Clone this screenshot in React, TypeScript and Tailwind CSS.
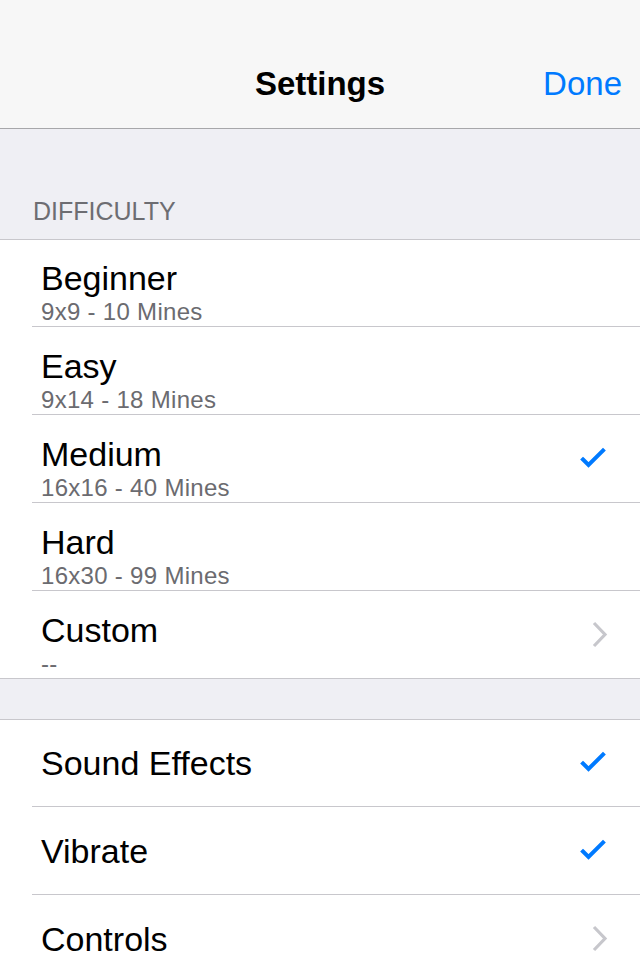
import React from "react";

const font = { fontFamily: '"Liberation Sans", Arial, sans-serif' };

function Check() {
  return (
    <svg width="30" height="24" viewBox="0 0 30 24" className="block">
      <path d="M3 12.5 L8.5 18 L23 3.5" fill="none" stroke="#007aff" strokeWidth="4" strokeLinecap="square" />
    </svg>
  );
}

function Chevron() {
  return (
    <svg width="20" height="28" viewBox="0 0 20 28" className="block">
      <path d="M4 2 L15 13.5 L4 25" fill="none" stroke="#c7c7cc" strokeWidth="3.2" />
    </svg>
  );
}

type Row = { title: string; sub?: string; accessory?: "check" | "chevron" };

const difficulty: Row[] = [
  { title: "Beginner", sub: "9x9 - 10 Mines" },
  { title: "Easy", sub: "9x14 - 18 Mines" },
  { title: "Medium", sub: "16x16 - 40 Mines", accessory: "check" },
  { title: "Hard", sub: "16x30 - 99 Mines" },
  { title: "Custom", sub: "--", accessory: "chevron" },
];

const options: Row[] = [
  { title: "Sound Effects", accessory: "check" },
  { title: "Vibrate", accessory: "check" },
  { title: "Controls", accessory: "chevron" },
];

function Accessory({ a }: { a?: Row["accessory"] }) {
  if (a === "check") return <div className="w-[40px] flex justify-end"><Check /></div>;
  if (a === "chevron") return <div className="w-[40px] flex justify-end"><Chevron /></div>;
  return null;
}

function Cell({ row, first, last }: { row: Row; first: boolean; last: boolean }) {
  return (
    <div
      className={`${first ? "h-[87px]" : "h-[88px]"} flex items-center pr-[30px] border-b border-[#c8c7cc] ${
        last ? "pl-[41px]" : "ml-[32px] pl-[9px]"
      }`}
    >
      {row.sub ? (
        <div className={`flex-1 self-stretch flex flex-col ${first ? "pt-[20px]" : "pt-[21px]"}`}>
          <div className="text-[34px] leading-[36px] text-black">{row.title}</div>
          <div className="mt-[2px] text-[24px] leading-[28px] text-[#6b6b70] tracking-[0.3px]">{row.sub}</div>
        </div>
      ) : (
        <div className="flex-1 text-[34px] leading-[40px] text-black">{row.title}</div>
      )}
      <Accessory a={row.accessory} />
    </div>
  );
}

export default function App() {
  return (
    <div className="w-[640px] h-[960px] overflow-hidden bg-[#efeff4]" style={font}>
      <div className="h-[129px] bg-[#f7f7f7] border-b border-[#a7a7aa] flex items-end">
        <div className="h-[88px] w-full flex items-center justify-center relative">
          <div className="text-[33px] font-bold text-black">Settings</div>
          <div className="absolute right-[18px] top-0 h-full flex items-center text-[33px] text-[#007aff]">Done</div>
        </div>
      </div>
      <div className="h-[110px] flex items-end pb-[13px] pl-[33px]">
        <div className="text-[25px] leading-[30px] text-[#6d6d72] uppercase">Difficulty</div>
      </div>
      <div className="bg-white border-t border-[#c8c7cc]">
        {difficulty.map((r, i) => (
          <Cell key={r.title} row={r} first={i === 0} last={i === difficulty.length - 1} />
        ))}
      </div>
      <div className="h-[40px]" />
      <div className="bg-white border-t border-[#c8c7cc]">
        {options.map((r, i) => (
          <Cell key={r.title} row={r} first={i === 0} last={i === options.length - 1} />
        ))}
      </div>
    </div>
  );
}
